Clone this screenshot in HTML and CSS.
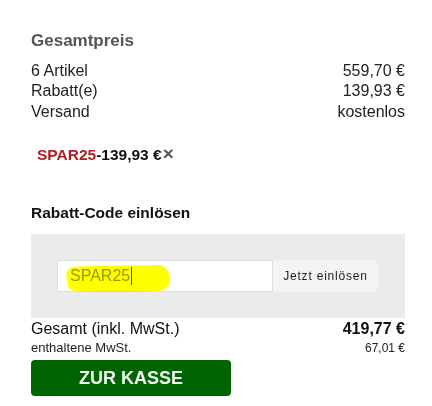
FILE: index.html
```html
<!DOCTYPE html>
<html lang="de">

<head>
    <meta charset="UTF-8">
    <meta name="viewport" content="width=device-width, initial-scale=1.0">
    <title>Warenkorb</title>
    <link rel="stylesheet" href="styles.css">
</head>

<body>
    <div class="cart-summary">
        <h3 class="summary-title">Gesamtpreis</h3>

        <div class="summary-rows">
            <div class="summary-row"><span>6 Artikel</span><span>559,70 €</span></div>
            <div class="summary-row"><span>Rabatt(e)</span><span>139,93 €</span></div>
            <div class="summary-row"><span>Versand</span><span>kostenlos</span></div>
        </div>

        <div class="applied-code">
            <span class="code-name">SPAR25</span>-139,93 €<span class="remove-code">×</span>
        </div>

        <h4 class="coupon-title">Rabatt-Code einlösen</h4>
        <div class="coupon-box">
            <form class="coupon-form">
                <div class="coupon-input">
                    <svg class="marker" width="106" height="28" viewBox="0 0 106 28">
                        <path d="M7 3 C30 1 70 2 95 1 C102 2 106 8 106 15 C106 23 101 27 92 27 C64 28 34 28 11 27 C5 26 3 22 4 17 C1 13 2 6 7 3 Z" fill="#ffff00"/>
                    </svg>
                    <span class="typed">SPAR25</span><span class="caret"></span>
                </div>
                <button type="button" class="coupon-btn">Jetzt einlösen</button>
            </form>
        </div>

        <div class="total-row"><span>Gesamt (inkl. MwSt.)</span><strong>419,77 €</strong></div>
        <div class="vat-row"><span class="vat-label">enthaltene MwSt.</span><span>67,01 €</span></div>

        <button type="button" class="checkout-btn">ZUR KASSE</button>
    </div>
</body>

</html>
```

FILE: styles.css
```css
body {
    font-family: "Liberation Sans", Arial, sans-serif;
    background-color: #fff;
    color: #222;
    margin: 0;
    padding: 0;
}

.cart-summary {
    width: 374px;
    padding: 31px 0 0 31px;
}

.summary-title {
    margin: 0;
    font-size: 17px;
    line-height: 19px;
    color: #555;
}

.summary-rows {
    margin-top: 10.5px;
}

.summary-row {
    display: flex;
    justify-content: space-between;
    font-size: 16px;
    line-height: 20.5px;
}

.applied-code {
    margin-top: 23.5px;
    padding-left: 6px;
    height: 17px;
    font-size: 15.5px;
    line-height: 17px;
    font-weight: bold;
    color: #111;
}

.code-name {
    color: #b01c22;
}

.remove-code {
    font-weight: bold;
    font-size: 19px;
    line-height: 10px;
    color: #555;
    margin-left: 1px;
}

.coupon-title {
    margin: 41.5px 0 0;
    font-size: 15.5px;
    line-height: 18px;
    color: #111;
}

.coupon-box {
    margin-top: 11.5px;
    background-color: #ebebeb;
    padding: 26.5px 26px 26px;
}

.coupon-form {
    display: flex;
}

.coupon-input {
    position: relative;
    box-sizing: border-box;
    width: 216px;
    height: 31.5px;
    background-color: #fff;
    border: 1px solid #ddd;
    padding-left: 12px;
    display: flex;
    align-items: center;
    font-size: 16px;
    color: #999;
}

.marker {
    position: absolute;
    left: 6px;
    top: 3px;
    mix-blend-mode: multiply;
}

.caret {
    display: inline-block;
    width: 1px;
    height: 18px;
    background-color: #555;
    margin-left: 1px;
}

.coupon-btn {
    width: 105px;
    height: 31.5px;
    border: none;
    border-radius: 0 6px 6px 0;
    background-color: #f4f4f4;
    color: #222;
    font-family: "Liberation Sans", Arial, sans-serif;
    font-size: 12px;
    letter-spacing: 0.8px;
    padding: 0;
    cursor: pointer;
}

.total-row,
.vat-row {
    display: flex;
    justify-content: space-between;
}

.total-row {
    font-size: 16px;
    line-height: 21.5px;
    color: #111;
}

.vat-row {
    margin-top: 2px;
    font-size: 12px;
    line-height: 14px;
    color: #222;
}

.vat-label {
    font-size: 13px;
}

.checkout-btn {
    display: block;
    margin-top: 5px;
    width: 200px;
    height: 36px;
    border: none;
    border-radius: 4px;
    background-color: #006400;
    color: #f4fbf4;
    font-family: "Liberation Sans", Arial, sans-serif;
    font-size: 18px;
    font-weight: bold;
    padding: 0;
    cursor: pointer;
}
```
